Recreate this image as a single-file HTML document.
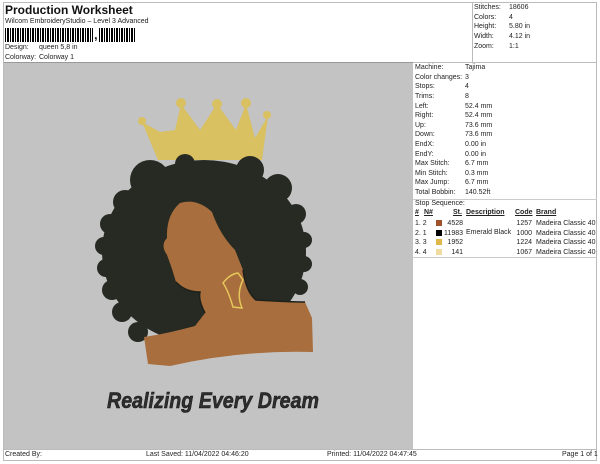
<!DOCTYPE html>
<html><head><style>
body{margin:0;width:600px;height:464px;background:#fff;font-family:"Liberation Sans",sans-serif;font-size:7px;color:#222;position:relative;overflow:hidden}
.a{position:absolute}
table{border-collapse:collapse;font-size:7px}
td{padding:0;height:9.6px;white-space:nowrap}
</style></head><body>
<div class="a" style="left:3px;top:2px;width:594px;height:459px;border:1px solid #bbb;box-sizing:border-box"></div>
<div class="a" style="left:5px;top:3px;font-size:12px;font-weight:bold;color:#111">Production Worksheet</div>
<div class="a" style="left:5px;top:18px">Wilcom EmbroideryStudio – Level 3 Advanced</div>
<div class="a" style="left:5px;top:28px;width:88px;height:14px;background:repeating-linear-gradient(90deg,#000 0 1px,#fff 1px 2px,#000 2px 3px,#000 3px 4px,#fff 4px 5px)"></div>
<div class="a" style="left:94px;top:28px;font-size:13px;font-weight:bold;line-height:14px">,</div>
<div class="a" style="left:99px;top:28px;width:36px;height:14px;background:repeating-linear-gradient(90deg,#000 0 1px,#fff 1px 2px,#000 2px 4px,#fff 4px 5px)"></div>
<div class="a" style="left:5px;top:44px">Design:</div><div class="a" style="left:39px;top:44px">queen 5,8 in</div>
<div class="a" style="left:5px;top:54px">Colorway:</div><div class="a" style="left:39px;top:54px">Colorway 1</div>
<div class="a" style="left:472px;top:2px;width:125px;height:60px;border-left:1px solid #bbb"></div>
<table class="a" style="left:474px;top:3px"><tr><td style="width:35px">Stitches:</td><td>18606</td></tr><tr><td>Colors:</td><td>4</td></tr><tr><td>Height:</td><td>5.80 in</td></tr><tr><td>Width:</td><td>4.12 in</td></tr><tr><td>Zoom:</td><td>1:1</td></tr></table>
<div class="a" style="left:4px;top:62px;width:409px;height:387px;background:#c3c3c3;border-top:1px solid #999"></div>
<div class="a" style="left:413px;top:62px;width:184px;height:1px;background:#bbb"></div>
<table class="a" style="left:415px;top:63px"><tr><td style="width:50px">Machine:</td><td>Tajima</td></tr><tr><td>Color changes:</td><td>3</td></tr><tr><td>Stops:</td><td>4</td></tr><tr><td>Trims:</td><td>8</td></tr><tr><td>Left:</td><td>52.4 mm</td></tr><tr><td>Right:</td><td>52.4 mm</td></tr><tr><td>Up:</td><td>73.6 mm</td></tr><tr><td>Down:</td><td>73.6 mm</td></tr><tr><td>EndX:</td><td>0.00 in</td></tr><tr><td>EndY:</td><td>0.00 in</td></tr><tr><td>Max Stitch:</td><td>6.7 mm</td></tr><tr><td>Min Stitch:</td><td>0.3 mm</td></tr><tr><td>Max Jump:</td><td>6.7 mm</td></tr><tr><td>Total Bobbin:</td><td>140.52ft</td></tr></table>
<div class="a" style="left:413px;top:199px;width:184px;height:1px;background:#ccc"></div>
<div class="a" style="left:415px;top:200px">Stop Sequence:</div>
<div class="a" style="left:415px;top:209px;font-weight:bold;text-decoration:underline">#</div>
<div class="a" style="left:424px;top:209px;font-weight:bold;text-decoration:underline">N#</div>
<div class="a" style="left:453px;top:209px;font-weight:bold;text-decoration:underline">St.</div>
<div class="a" style="left:466px;top:209px;font-weight:bold;text-decoration:underline">Description</div>
<div class="a" style="left:515px;top:209px;font-weight:bold;text-decoration:underline">Code</div>
<div class="a" style="left:536px;top:209px;font-weight:bold;text-decoration:underline">Brand</div>
<div class="a" style="left:415px;top:219px;line-height:9.7px">1. 2<br>2. 1<br>3. 3<br>4. 4</div>
<div class="a" style="left:436px;top:220px;width:6px;height:6px;background:#a0522d"></div>
<div class="a" style="left:436px;top:230px;width:6px;height:6px;background:#000"></div>
<div class="a" style="left:436px;top:239px;width:6px;height:6px;background:#e0b84a"></div>
<div class="a" style="left:436px;top:249px;width:6px;height:6px;background:#f0dca0"></div>
<div class="a" style="left:443px;top:219px;width:20px;text-align:right;line-height:9.7px">4528<br>11983<br>1952<br>141</div>
<div class="a" style="left:466px;top:229px">Emerald Black</div>
<div class="a" style="left:513px;top:219px;width:19px;text-align:right;line-height:9.7px">1257<br>1000<br>1224<br>1067</div>
<div class="a" style="left:536px;top:219px;line-height:9.7px">Madeira Classic 40<br>Madeira Classic 40<br>Madeira Classic 40<br>Madeira Classic 40</div>
<div class="a" style="left:413px;top:257px;width:184px;height:1px;background:#ccc"></div>
<div class="a" style="left:3px;top:449px;width:594px;height:1px;background:#bbb"></div>
<div class="a" style="left:5px;top:451px">Created By:</div>
<div class="a" style="left:146px;top:451px">Last Saved: 11/04/2022 04:46:20</div>
<div class="a" style="left:327px;top:451px">Printed: 11/04/2022 04:47:45</div>
<div class="a" style="left:562px;top:451px">Page 1 of 1</div>
<svg class="a" style="left:0;top:0" width="600" height="464">
<path d="M142,122 L158,160 L262,160 L268,116 L255,138 L246,104 L236,130 L217,104 L200,130 L181,104 L175,130 L160,132 L142,122Z" fill="#d9c061"/>
<circle cx="142" cy="121" r="4" fill="#d9c061"/><circle cx="181" cy="103" r="5" fill="#d9c061"/><circle cx="217" cy="104" r="5" fill="#d9c061"/><circle cx="246" cy="103" r="5" fill="#d9c061"/><circle cx="267" cy="115" r="4" fill="#d9c061"/>
<g fill="#262a22">
<ellipse cx="204" cy="252" rx="102" ry="92"/>
<circle cx="150" cy="180" r="20"/><circle cx="125" cy="202" r="12"/><circle cx="110" cy="224" r="10"/><circle cx="104" cy="246" r="9"/><circle cx="106" cy="268" r="9"/><circle cx="112" cy="290" r="10"/><circle cx="122" cy="312" r="10"/><circle cx="138" cy="332" r="10"/>
<circle cx="185" cy="164" r="10"/><circle cx="250" cy="170" r="14"/><circle cx="278" cy="188" r="14"/><circle cx="296" cy="214" r="10"/><circle cx="304" cy="240" r="8"/><circle cx="304" cy="264" r="8"/><circle cx="300" cy="287" r="8"/>
</g>
<path d="M144,337 Q165,334 195,326 L205,313 Q198,300 200,292 Q185,292 176,282 Q172,268 167,255 Q160,245 167,238 Q166,215 180,203 Q197,198 212,212 Q220,235 235,250 L243,270 Q246,292 256,300 Q290,302 305,302 L312,318 L313,352 Q240,350 170,366 L148,364 Z" fill="#a86e3d"/>
<path d="M205,313 Q198,300 200,292 Q185,292 176,282 M243,270 Q246,292 256,300 Q290,302 305,302" fill="none" stroke="#1e211b" stroke-width="1.5"/>
<path d="M223,283 Q230,274 238,273 L243,280 Q236,294 242,308 L233,307 Q228,290 223,283Z" fill="none" stroke="#e6c75a" stroke-width="1.5"/>
<text x="107" y="408" font-family="Liberation Sans,sans-serif" font-size="22" font-weight="bold" font-style="italic" fill="#2e2e2e" stroke="#111" stroke-width="0.5" textLength="212" lengthAdjust="spacingAndGlyphs">Realizing Every Dream</text>
</svg>
</body></html>
